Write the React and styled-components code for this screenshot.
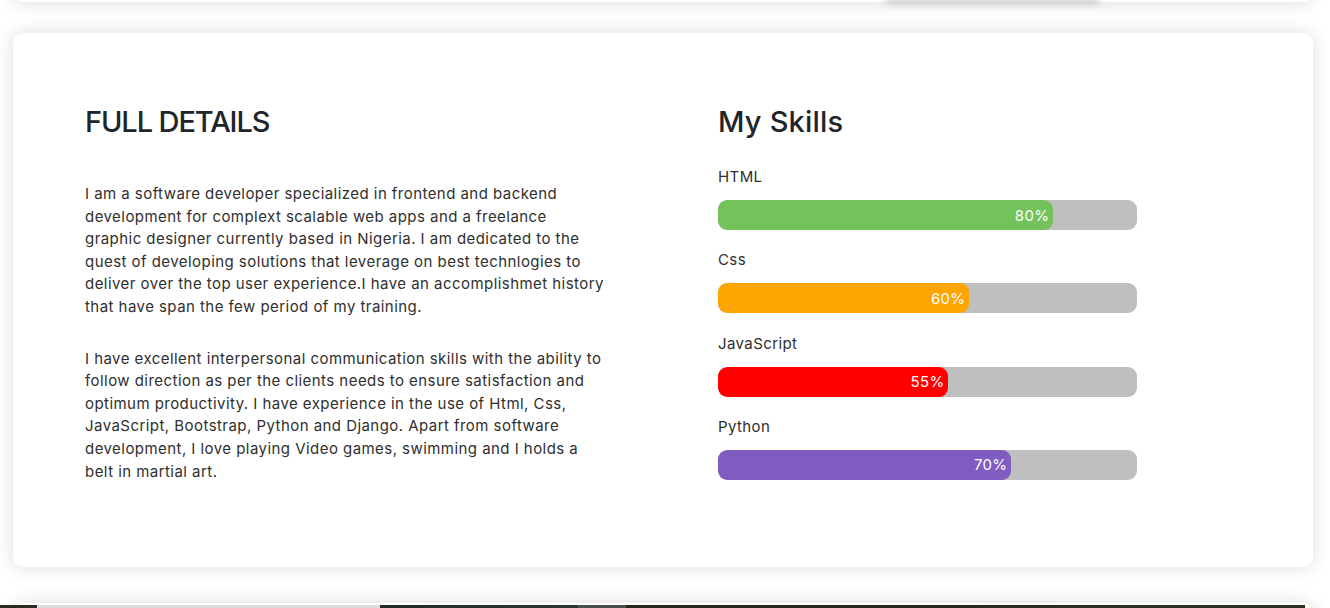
import React from 'react';
import styled, { createGlobalStyle } from 'styled-components';

const skills = [
  { name: 'HTML', value: 80, color: '#73c25c' },
  { name: 'Css', value: 60, color: '#ffa500' },
  { name: 'JavaScript', value: 55, color: '#ff0000' },
  { name: 'Python', value: 70, color: '#805bc0' },
];

const GlobalStyle = createGlobalStyle`
  html, body {
    margin: 0;
    padding: 0;
    background: #ffffff;
    overflow: hidden;
  }
  body {
    font-family: Inter, "Open Sans", sans-serif;
    color: #333;
  }
`;

const Page = styled.div`
  display: flex;
  flex-direction: column;
  padding: 0 17px 0 13px;
  height: 608px;
  overflow: hidden;
`;

const PrevCard = styled.div`
  position: relative;
  flex: none;
  height: 40px;
  margin-top: -38px;
  background: #fff;
  border-radius: 10px;
  box-shadow: 0 0 18px rgba(0, 0, 0, 0.16);
`;

const PrevButton = styled.div`
  position: absolute;
  left: 872px;
  width: 215px;
  bottom: 2px;
  height: 10px;
  border-radius: 6px;
  background: #fff;
  box-shadow: 0 3px 8px rgba(0, 0, 0, 0.2);
`;

const Card = styled.section`
  flex: none;
  margin-top: 31px;
  height: 534px;
  box-sizing: border-box;
  background: #fff;
  border-radius: 10px;
  box-shadow: 0 0 18px rgba(0, 0, 0, 0.14);
  padding: 71px 72px 0;
  display: grid;
  grid-template-columns: 521px 419px;
  align-items: start;
  column-gap: 112px;
`;

const Column = styled.div`
  display: flex;
  flex-direction: column;
`;

const Heading = styled.h2`
  margin: 0;
  font-size: 29px;
  line-height: 36px;
  font-weight: 500;
  letter-spacing: ${p => p.$tight ? '-1.1px' : '0.2px'};
  color: #212529;
`;

const Paragraph = styled.p`
  margin: ${p => (p.$first ? '43px' : '29px')} 0 0;
  font-size: 15px;
  line-height: 22.6px;
  letter-spacing: 0.45px;
  color: #2f2f2f;
`;

const SkillList = styled.div`
  display: flex;
  flex-direction: column;
  margin-top: 26px;
`;

const Skill = styled.div`
  display: flex;
  flex-direction: column;
  & + & {
    margin-top: 19.3px;
  }
`;

const SkillName = styled.div`
  font-size: 15px;
  line-height: 22px;
  letter-spacing: 0.4px;
  color: #2f2f2f;
  margin-bottom: 12px;
`;

const Track = styled.div`
  height: 30px;
  border-radius: 9px;
  background: #bfbfbf;
  overflow: hidden;
  display: flex;
`;

const Fill = styled.div`
  height: 100%;
  border-radius: 9px;
  background: ${p => p.$color};
  color: #fff;
  font-size: 15px;
  font-weight: 400;
  letter-spacing: 0.3px;
  display: flex;
  align-items: center;
  justify-content: flex-end;
  padding-right: 4px;
  box-sizing: border-box;
`;

const NextCard = styled.div`
  flex: none;
  margin-top: 36px;
  height: 20px;
  background: #fff;
  border-radius: 10px 10px 0 0;
  box-shadow: 0 0 18px rgba(0, 0, 0, 0.14);
  padding-top: 2px;
`;

const NextBanner = styled.div`
  height: 10px;
  margin: 0 8px 0 -13px;
  background: linear-gradient(
    90deg,
    #2b2b22 0px,
    #2b2b22 37px,
    #dcdcdc 37px,
    #dcdcdc 380px,
    #1f2a2a 380px,
    #2a3636 578px,
    #4a5050 578px,
    #4a5050 626px,
    #27271f 626px,
    #2e2e22 100%
  );
`;

const App = () => {
  return (
    <>
      <GlobalStyle />
      <Page>
        <PrevCard>
          <PrevButton />
        </PrevCard>

        <Card>
          <Column>
            <Heading $tight>FULL DETAILS</Heading>
            <Paragraph $first>
              I am a software developer specialized in frontend and backend development for complext
              scalable web apps and a freelance graphic designer currently based in Nigeria. I am
              dedicated to the quest of developing solutions that leverage on best technlogies to
              deliver over the top user experience.I have an accomplishmet history that have span the
              few period of my training.
            </Paragraph>
            <Paragraph>
              I have excellent interpersonal communication skills with the ability to follow direction
              as per the clients needs to ensure satisfaction and optimum productivity. I have
              experience in the use of Html, Css, JavaScript, Bootstrap, Python and Django. Apart from
              software development, I love playing Video games, swimming and I holds a belt in martial
              art.
            </Paragraph>
          </Column>

          <Column>
            <Heading>My Skills</Heading>
            <SkillList>
              {skills.map(skill => (
                <Skill key={skill.name}>
                  <SkillName>{skill.name}</SkillName>
                  <Track>
                    <Fill $color={skill.color} style={{ width: `${skill.value}%` }}>
                      {skill.value}%
                    </Fill>
                  </Track>
                </Skill>
              ))}
            </SkillList>
          </Column>
        </Card>

        <NextCard>
          <NextBanner />
        </NextCard>
      </Page>
    </>
  );
};

export default App;
